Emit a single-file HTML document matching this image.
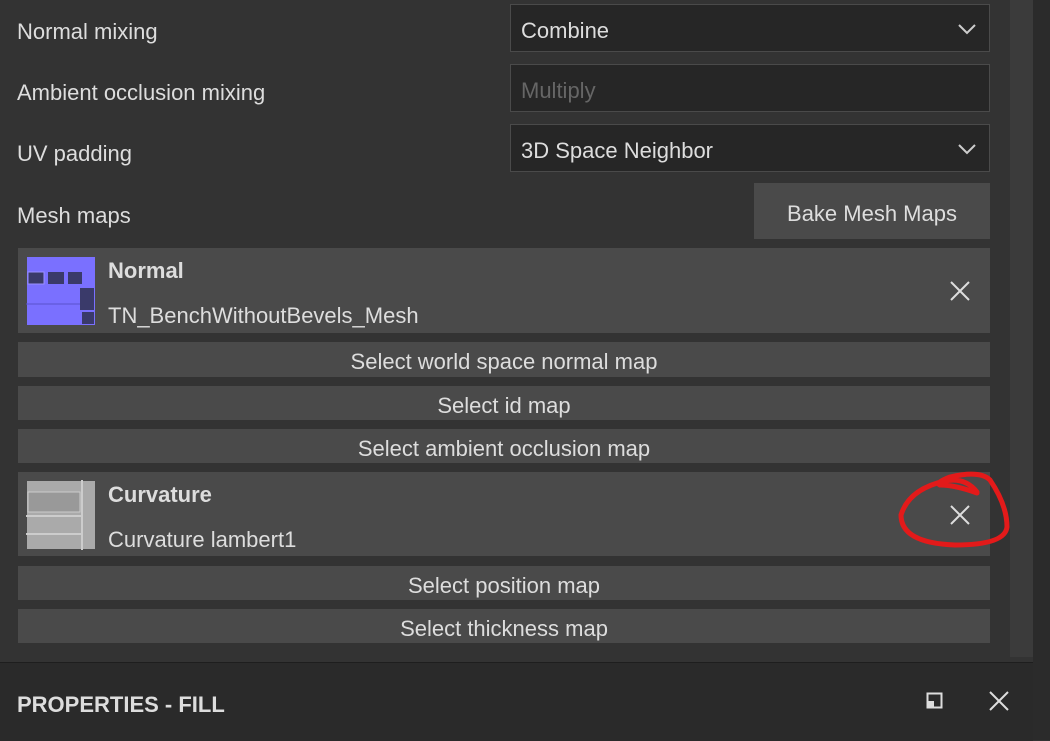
<!DOCTYPE html>
<html><head><style>
body{margin:0;width:1050px;height:740px;background:#333;font-family:"Liberation Sans",sans-serif;color:#ddd;position:relative;overflow:hidden}
.a{position:absolute}
.lbl{font-size:22px;left:17px}
.dd{left:510px;width:478px;height:46px;background:#262626;border:1px solid #4a4a4a;font-size:22px;line-height:52px;box-sizing:content-box}
.dd span{margin-left:10px}
.chev{position:absolute;right:12px;top:17px}
.card{left:18px;width:972px;background:#4a4a4a}
.btn{left:18px;width:972px;background:#4a4a4a;font-size:22px;text-align:center;color:#ddd}
.x{position:absolute}
</style></head><body>
<div class="a lbl" style="top:19px">Normal mixing</div>
<div class="a lbl" style="top:80px">Ambient occlusion mixing</div>
<div class="a lbl" style="top:141px">UV padding</div>
<div class="a lbl" style="top:203px">Mesh maps</div>
<div class="a dd" style="top:4px"><span>Combine</span><svg class="chev" width="20" height="14"><path d="M2 3l8 8 8-8" stroke="#ccc" stroke-width="2" fill="none"/></svg></div>
<div class="a dd" style="top:64px"><span style="color:#666">Multiply</span></div>
<div class="a dd" style="top:124px"><span>3D Space Neighbor</span><svg class="chev" width="20" height="14"><path d="M2 3l8 8 8-8" stroke="#ccc" stroke-width="2" fill="none"/></svg></div>
<div class="a" style="left:754px;top:183px;width:236px;height:56px;background:#4a4a4a;font-size:22px;line-height:62px;text-align:center">Bake Mesh Maps</div>

<div class="a card" style="top:248px;height:85px">
 <svg class="a" style="left:8px;top:8px" width="70" height="70"><rect x="1" y="1" width="68" height="68" fill="#7a70ff"/><rect x="2" y="16" width="16" height="12" fill="#3a3a6a" stroke="#9a90ff"/><rect x="22" y="16" width="16" height="12" fill="#3a3a6a"/><rect x="42" y="16" width="14" height="12" fill="#3a3a6a"/><rect x="54" y="32" width="14" height="22" fill="#3a3a6a"/><rect x="56" y="56" width="12" height="12" fill="#3a3a6a"/><path d="M0 48h54" stroke="#5a52cc"/></svg>
 <div class="a" style="left:90px;top:10px;font-size:22px;font-weight:bold">Normal</div>
 <div class="a" style="left:90px;top:55px;font-size:22px">TN_BenchWithoutBevels_Mesh</div>
 <svg class="x" style="left:932px;top:33px" width="20" height="20"><path d="M1 1l18 18M19 1L1 19" stroke="#ddd" stroke-width="2"/></svg>
</div>
<div class="a btn" style="top:342px;height:35px;line-height:40px">Select world space normal map</div>
<div class="a btn" style="top:386px;height:34px;line-height:39px">Select id map</div>
<div class="a btn" style="top:429px;height:34px;line-height:39px">Select ambient occlusion map</div>
<div class="a card" style="top:472px;height:84px">
 <svg class="a" style="left:8px;top:8px" width="70" height="70"><rect x="1" y="1" width="68" height="68" fill="#aaa"/><rect x="2" y="12" width="52" height="20" fill="#999" stroke="#ccc"/><path d="M0 36h56M0 54h56M56 0v70" stroke="#ccc" stroke-width="2"/></svg>
 <div class="a" style="left:90px;top:10px;font-size:22px;font-weight:bold">Curvature</div>
 <div class="a" style="left:90px;top:55px;font-size:22px">Curvature lambert1</div>
 <svg class="x" style="left:932px;top:33px" width="20" height="20"><path d="M1 1l18 18M19 1L1 19" stroke="#ddd" stroke-width="2"/></svg>
</div>
<div class="a btn" style="top:566px;height:34px;line-height:39px">Select position map</div>
<div class="a btn" style="top:609px;height:34px;line-height:39px">Select thickness map</div>

<svg class="a" style="left:895px;top:465px" width="125" height="90"><path d="M82 27 Q70 12 50 16 Q14 24 6 50 Q6 78 60 80 Q110 80 112 62 Q112 40 95 15 Q85 5 55 12 Q40 18 45 20 Q60 20 82 28" stroke="#e31a1a" stroke-width="5" fill="none" stroke-linecap="round"/></svg>

<div class="a" style="left:1010px;top:0;width:23px;height:657px;background:#3b3b3b"></div>
<div class="a" style="left:1033px;top:0;width:17px;height:740px;background:#2b2b2b"></div>
<div class="a" style="left:0;top:662px;width:1033px;height:78px;background:#2a2a2a;border-top:1px solid #1e1e1e"></div>
<div class="a" style="left:17px;top:692px;font-size:22px;font-weight:bold;color:#ddd">PROPERTIES - FILL</div>
<svg class="a" style="left:926px;top:692px" width="18" height="18"><rect x="1.5" y="1.5" width="14" height="14" stroke="#ddd" stroke-width="2" fill="none"/><rect x="2" y="9" width="6" height="6" fill="#ddd"/></svg>
<svg class="a" style="left:989px;top:691px" width="20" height="20"><path d="M1 1l18 18M19 1L1 19" stroke="#ddd" stroke-width="2"/></svg>
</body></html>
